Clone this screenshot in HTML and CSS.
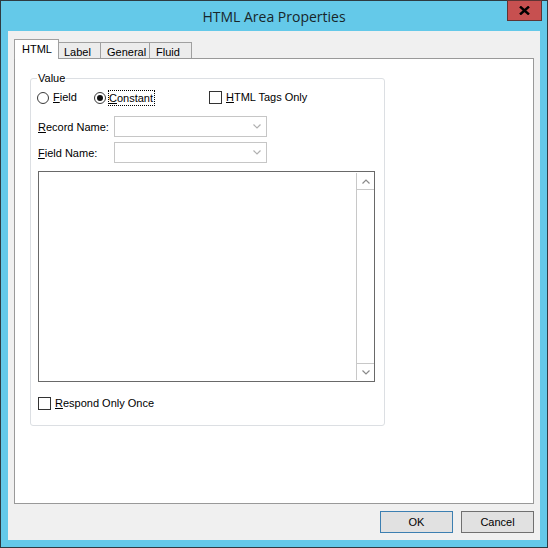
FILE: index.html
```html
<!DOCTYPE html>
<html lang="en">
  <head>
    <meta charset="UTF-8" />
    <title>HTML Area Properties</title>
    <link rel="stylesheet" href="styles.css">
  </head>
  <body>
    <div class="window">
      <div class="titlebar">
        <span class="title">HTML Area Properties</span>
        <button class="close">
          <svg width="11" height="9" viewBox="0 0 11 9"><path d="M1 0.5 L10 8.5 M10 0.5 L1 8.5" stroke="#000" stroke-width="2.4"/></svg>
        </button>
      </div>
      <div class="client">
        <div class="tabs">
          <div class="tab active">HTML</div>
          <div class="tab tab-label">Label</div>
          <div class="tab tab-general">General</div>
          <div class="tab tab-fluid">Fluid</div>
        </div>
        <div class="panel">
          <fieldset class="group">
            <legend>Value</legend>
            <div class="row options">
              <label class="opt opt-field"><span class="radio"></span><span><u>F</u>ield</span></label>
              <label class="opt opt-const"><span class="radio checked"></span><span class="focus"><u>C</u>onstant</span></label>
              <label class="opt"><span class="check"></span><span><u>H</u>TML Tags Only</span></label>
            </div>
            <div class="row field first">
              <span class="field-label"><u>R</u>ecord Name:</span>
              <div class="combo">
                <svg width="8" height="5" viewBox="0 0 8 5"><path d="M0.5 0.5 L4 4 L7.5 0.5" fill="none" stroke="#b0b0b0" stroke-width="1.2"/></svg>
              </div>
            </div>
            <div class="row field">
              <span class="field-label"><u>F</u>ield Name:</span>
              <div class="combo">
                <svg width="8" height="5" viewBox="0 0 8 5"><path d="M0.5 0.5 L4 4 L7.5 0.5" fill="none" stroke="#b0b0b0" stroke-width="1.2"/></svg>
              </div>
            </div>
            <div class="editor">
              <div class="editor-text"></div>
              <div class="scrollbar">
                <div class="sb-btn">
                  <svg width="8" height="5" viewBox="0 0 8 5"><path d="M0.5 4.5 L4 1 L7.5 4.5" fill="none" stroke="#8a8a8a" stroke-width="1.2"/></svg>
                </div>
                <div class="sb-track"></div>
                <div class="sb-btn">
                  <svg width="8" height="5" viewBox="0 0 8 5"><path d="M0.5 0.5 L4 4 L7.5 0.5" fill="none" stroke="#8a8a8a" stroke-width="1.2"/></svg>
                </div>
              </div>
            </div>
            <label class="opt respond"><span class="check"></span><span><u>R</u>espond Only Once</span></label>
          </fieldset>
        </div>
        <div class="buttons">
          <button class="btn default">OK</button>
          <button class="btn">Cancel</button>
        </div>
      </div>
    </div>
  </body>
</html>
```

FILE: styles.css
```css
body {
  margin: 0;
  font-family: "Liberation Sans", Arial, sans-serif;
  font-size: 11px;
  color: #000;
}
u {
  text-decoration: underline;
  text-underline-offset: 1px;
}
.window {
  width: 548px;
  height: 548px;
  box-sizing: border-box;
  border: 1px solid #2e3b42;
  background: #64c9e9;
  display: flex;
  flex-direction: column;
}
.titlebar {
  position: relative;
  height: 30px;
  display: flex;
  justify-content: center;
  align-items: center;
}
.title {
  font-family: "Open Sans", sans-serif;
  font-size: 14px;
  color: #18262a;
  margin-top: 1px;
}
.close {
  position: absolute;
  top: -1px;
  right: 5px;
  width: 35px;
  height: 21px;
  padding: 0;
  background: #c75050;
  border: 1px solid #5e3434;
  display: flex;
  align-items: center;
  justify-content: center;
}
.client {
  flex: 1;
  margin: 0 7px 7px 7px;
  background: #f0f0f0;
  display: flex;
  flex-direction: column;
}
.tabs {
  display: flex;
  align-items: flex-end;
  margin: 8px 0 0 6px;
}
.tab {
  height: 16px;
  box-sizing: border-box;
  border: 1px solid #a0a0a0;
  border-bottom: none;
  background: #ececec;
  padding: 3px 0 0 5px;
  margin-left: -1px;
}
.tab-label {
  width: 43px;
}
.tab-general {
  width: 50px;
  padding-left: 6px;
}
.tab-fluid {
  width: 43px;
  padding-left: 6px;
}
.tab.active {
  position: relative;
  z-index: 1;
  height: 20px;
  margin-bottom: -1px;
  margin-left: 0;
  background: #fff;
  padding: 3px 0 0 7px;
  width: 45px;
}
.panel {
  margin: 0 6px;
  height: 446px;
  box-sizing: border-box;
  border: 1px solid #999;
  background: #fff;
}
.group {
  margin: 13px 0 0 15px;
  width: 355px;
  height: 354px;
  box-sizing: border-box;
  border: 1px solid #dcdfe3;
  border-radius: 3px;
  padding: 6px 9px 0 6px;
  display: flex;
  flex-direction: column;
}
.group legend {
  padding: 0 1px;
  line-height: 13px;
}
.row {
  display: flex;
  align-items: center;
}
.options {
  height: 13px;
}
.opt {
  display: flex;
  align-items: center;
  gap: 4px;
  line-height: 13px;
}
.opt-field {
  width: 57px;
}
.opt-const {
  width: 115px;
}
.radio {
  width: 12px;
  height: 12px;
  box-sizing: border-box;
  border: 1px solid #3a3a3a;
  border-radius: 50%;
  background: #fff;
  display: flex;
  align-items: center;
  justify-content: center;
}
.radio.checked::after {
  content: "";
  width: 6px;
  height: 6px;
  border-radius: 50%;
  background: #111;
}
.check {
  width: 13px;
  height: 13px;
  box-sizing: border-box;
  border: 1px solid #333;
  background: #fff;
}
.focus {
  outline: 1px dotted #000;
  outline-offset: 0;
  padding: 1px 1px 0 0;
  margin-left: -1px;
}
.field {
  margin-left: 1px;
  margin-top: 5px;
}
.field.first {
  margin-top: 12px;
}
.field-label {
  width: 76px;
}
.combo {
  width: 153px;
  height: 21px;
  box-sizing: border-box;
  border: 1px solid #c6c6c6;
  background: #fff;
  display: flex;
  align-items: center;
  justify-content: flex-end;
  padding-right: 5px;
}
.editor {
  margin: 8px 0 0 1px;
  width: 337px;
  height: 211px;
  box-sizing: border-box;
  border: 1px solid #696969;
  display: flex;
}
.editor-text {
  flex: 1;
  background: #fff;
}
.scrollbar {
  width: 17px;
  display: flex;
  flex-direction: column;
  border-left: 1px solid #c8c8c8;
  margin: 1px 0;
}
.sb-btn {
  height: 17px;
  box-sizing: border-box;
  display: flex;
  align-items: center;
  justify-content: center;
  border-bottom: 1px solid #c8c8c8;
}
.sb-btn:last-child {
  border-bottom: none;
  border-top: 1px solid #c8c8c8;
}
.sb-track {
  flex: 1;
}
.respond {
  margin: 15px 0 0 1px;
}
.buttons {
  display: flex;
  justify-content: flex-end;
  gap: 8px;
  margin: 7px 6px 0 0;
}
.btn {
  width: 73px;
  height: 22px;
  padding: 0;
  border: 1px solid #707070;
  background: #e1e1e1;
  font-family: "Liberation Sans", Arial, sans-serif;
  font-size: 11px;
  color: #000;
}
.btn.default {
  border-color: #3c7fb1;
}
```
